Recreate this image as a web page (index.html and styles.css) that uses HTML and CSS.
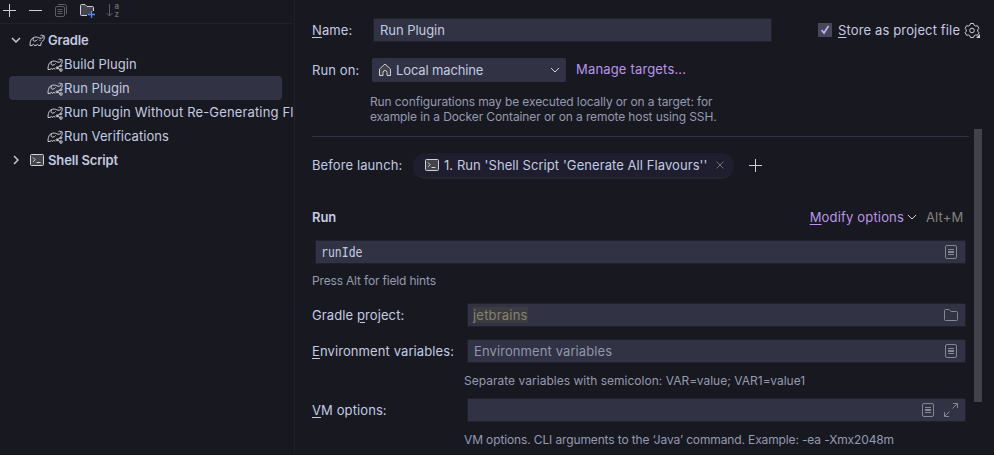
FILE: index.html
```html
<!DOCTYPE html>
<html lang="en">
<head>
<meta charset="utf-8">
<title>Run Configurations</title>
<link rel="stylesheet" href="styles.css">
</head>
<body>
<svg class="defs" width="0" height="0" aria-hidden="true">
  <symbol id="elephant" viewBox="0 0 16 16"><path d="M1 13.500C1 9.500 2 6 5.500 5.200 8 4.600 9.500 5.800 11 6.200c2 .5 3.200-.6 3-2C13.800 3 12.300 2.700 11.500 3.700M14.500 3c1.300 1.500 1 4.500-.8 6-1.300 1-1.900 2.300-2 4.500H9.500c-.2-1.500-2-1.500-2.200 0H5.500c-.2-1.500-2-1.500-2.200 0H1M4.500 6c-.8 1.800-.3 3.300 1.200 3.200 1.300-.1 2.100-.9 2.800-1.700M10.300 8.200h1.400"/></symbol>
  <symbol id="elephant-run" viewBox="0 0 16 16"><path d="M1 13.500C1 9.500 2 6 5.500 5.200 8 4.600 9.500 5.800 11 6.200c2 .5 3.200-.6 3-2C13.800 3 12.300 2.700 11.500 3.700M14.500 3c1.300 1.500 1 4-.5 5.500M8 13.500c-.2-1.500-2-1.500-2.500 0-.2-1.500-2-1.500-2.200 0H1M4.500 6c-.8 1.800-.3 3.300 1.200 3.200 1.300-.1 2.100-.9 2.800-1.700M13.500 9.800l-3.500 2 3.500 2"/><circle cx="10" cy="11.800" r="1"/><circle cx="14" cy="9.800" r="1"/><circle cx="14" cy="14" r="1.300"/></symbol>
  <symbol id="terminal" viewBox="0 0 16 16"><rect class="shade" x="1.500" y="2.500" width="13" height="11" rx="1"/><path d="m4 5.500 2.200 2.200L4 9.900M7.500 10.500h4"/></symbol>
  <symbol id="list" viewBox="0 0 16 16"><rect x="2.500" y="1.500" width="11" height="13" rx="1.500"/><path d="M5 5.500h6M5 7.500h6M5 8.500h6M5 10.500h6"/></symbol>
  <symbol id="down" viewBox="0 0 16 16"><path d="m4 6 4 4 4-4"/></symbol>
  <symbol id="plus" viewBox="0 0 16 16"><path d="M8.500 2v13M2 8.500h13"/></symbol>
</svg>
<div class="window">
  <aside class="sidebar">
    <div class="toolbar">
      <svg class="icon"><use href="#plus"/></svg>
      <svg class="icon" viewBox="0 0 16 16"><path d="M2 8.500h13"/></svg>
      <svg class="icon disabled" viewBox="0 0 16 16"><rect x="2.500" y="4.500" width="9" height="10" rx="1.500"/><path d="M5 2.500h6.500q2 0 2 2V12M4.500 7.500h5M4.500 9.500h5M4.500 11.500h5"/></svg>
      <svg class="icon" viewBox="0 0 16 16"><path class="shade" d="M8 13.500H2.500q-1 0-1-1v-9q0-1 1-1H6l2 2h5.500q1 0 1 1V9"/><path class="blue" d="M12.500 9v7M9 12.500h7"/></svg>
      <svg class="icon disabled" viewBox="0 0 16 16"><path d="M4.500 2v12M1.500 11l3 3 3-3"/><text x="9.500" y="7">a</text><text x="9.500" y="15">z</text></svg>
    </div>
    <div class="tree">
      <div class="node group"><svg class="icon arrow"><use href="#down"/></svg><svg class="icon"><use href="#elephant"/></svg><span>Gradle</span></div>
      <div class="node leaf"><svg class="icon"><use href="#elephant-run"/></svg><span>Build Plugin</span></div>
      <div class="node leaf selected"><svg class="icon"><use href="#elephant-run"/></svg><span>Run Plugin</span></div>
      <div class="node leaf long"><svg class="icon"><use href="#elephant-run"/></svg><span>Run Plugin Without Re-Generating Fl</span></div>
      <div class="node leaf"><svg class="icon"><use href="#elephant-run"/></svg><span>Run Verifications</span></div>
      <div class="node group"><svg class="icon arrow" viewBox="0 0 16 16"><path d="m6 4 4 4-4 4"/></svg><svg class="icon"><use href="#terminal"/></svg><span>Shell Script</span></div>
    </div>
  </aside>
  <main class="main">
    <div class="row name-row">
      <span class="label short"><u>N</u>ame:</span>
      <div class="field name-field">Run Plugin</div>
      <span class="check"><svg viewBox="0 0 14 14"><path d="m3.500 7 2.500 3 4.500-7"/></svg></span>
      <span class="store"><u>S</u>tore as project file</span>
      <svg class="icon gear" viewBox="0 0 16 16"><path d="m6.500 1.500h3l.7 1.800 1.300.7 1.900-.3 1.500 2.600-1.200 1.500v1.400l1.200 1.500-1.500 2.600-1.900-.3-1.300.7-.7 1.800h-3l-.7-1.800-1.300-.7-1.900.3-1.500-2.600 1.200-1.500V7.800L1.100 6.300l1.500-2.600 1.900.3 1.300-.7z"/><circle cx="8" cy="8.500" r="2.300"/><path class="corner" d="M16 12v4h-4z"/></svg>
    </div>
    <div class="row target-row">
      <span class="label short">Run on:</span>
      <div class="select"><svg class="icon" viewBox="0 0 16 16"><path class="shade" d="M2.500 7 8 2l5.500 5v6.500h-3.500v-3q0-2-2-2t-2 2v3H2.500z"/></svg><span>Local machine</span><svg class="icon"><use href="#down"/></svg></div>
      <span class="link">Manage targets...</span>
    </div>
    <p class="help target-help">Run configurations may be executed locally or on a target: for<br>example in a Docker Container or on a remote host using SSH.</p>
    <div class="scroll">
      <div class="content">
        <div class="row launch-row">
          <span class="label launch">Before launch:</span>
          <div class="chip"><svg class="icon"><use href="#terminal"/></svg><span>1. Run 'Shell Script 'Generate All Flavours''</span><svg class="icon close" viewBox="0 0 16 16"><path d="m4.500 4.500 7 7m0-7-7 7"/></svg></div>
          <svg class="icon"><use href="#plus"/></svg>
        </div>
        <div class="row run-row"><span class="heading">Run</span><span class="link modify"><u>M</u>odify options</span><svg class="icon"><use href="#down"/></svg><span class="shortcut">Alt+M</span></div>
        <div class="field task"><span>runIde</span><svg class="icon dim"><use href="#list"/></svg></div>
        <p class="help task-help">Press Alt for field hints</p>
        <div class="row project-row"><span class="label wide">Gradle <u>p</u>roject:</span><div class="field"><mark>jetbrains</mark><svg class="icon dim" viewBox="0 0 16 16"><path d="M1.500 3.500q0-1 1-1h3.500l2 2h5.500q1 0 1 1v7q0 1-1 1h-11q-1 0-1-1z"/></svg></div></div>
        <div class="row env-row"><span class="label wide"><u>E</u>nvironment variables:</span><div class="field placeholder"><span>Environment variables</span><svg class="icon dim"><use href="#list"/></svg></div></div>
        <p class="help field-help env-help">Separate variables with semicolon: VAR=value; VAR1=value1</p>
        <div class="row vm-row"><span class="label wide"><u>V</u>M options:</span><div class="field"><svg class="icon dim first"><use href="#list"/></svg><svg class="icon dim" viewBox="0 0 16 16"><path d="M9.500 6.500 14 2M10 1.500h4.500V6M6.500 9.500 2 14M1.500 10v4.500H6"/></svg></div></div>
        <p class="help field-help vm-help">VM options. CLI arguments to the ‘Java’ command. Example: -ea -Xmx2048m</p>
      </div>
      <div class="scrollbar"></div>
    </div>
  </main>
</div>
</body>
</html>
```
FILE: styles.css
```css
* { box-sizing: border-box; }
body { margin: 0; background: #181821; color: #c4cbe0; font: 13px/16px Inter, sans-serif; overflow: hidden; }
.defs { display: none; }
.window { display: flex; width: 994px; height: 455px; overflow: hidden; border-bottom: 1px solid #12121a; white-space: nowrap; }
.icon { width: 16px; height: 16px; flex: none; fill: none; stroke: #ced0d6; stroke-width: 1; }
.shade { fill: #43454a; }
.disabled { stroke: #5c5d64; }
.disabled text { fill: #6a6b72; stroke: none; font: 600 8px/8px Inter, sans-serif; }
.blue { stroke: #548af7; stroke-width: 1.300; }
.dim { stroke: #85868e; }
u { text-decoration-thickness: 1px; text-underline-offset: 2px; }

.sidebar { width: 295px; flex: none; border-right: 1px solid #20202b; overflow: hidden; }
.toolbar { display: flex; gap: 10px; height: 24px; padding: 2px 0 0 1px; border-bottom: 1px solid #20202b; }
.tree { padding-top: 4px; }
.node { display: flex; align-items: center; height: 24px; }
.group { padding-left: 8px; font-weight: 600; letter-spacing: -.13px; }
.group .arrow { margin-right: 5px; stroke-width: 1.400; }
.group span { margin-left: 3px; }
.leaf { margin-left: 9px; padding-left: 38px; }
.leaf span { margin-left: 1px; letter-spacing: .05px; }
.long span { letter-spacing: .15px; }
.selected { width: 273px; background: #313244; border-radius: 4px; }

.main { flex: 1; padding: 19px 0 0 17px; }
.row { display: flex; align-items: center; }
.label { flex: none; letter-spacing: .1px; }
.field { display: flex; align-items: center; height: 22px; background: #313244; outline: 1px solid #20202c; padding: 0 6px; }
.name-row { height: 22px; }
.name-row .label { padding-bottom: 1px; }
.short { width: 60px; }
.name-field { width: 397px; margin-left: 2px; padding-bottom: 1px; letter-spacing: -.05px; }
.check { width: 14px; height: 14px; margin-left: 47px; background: #45475a; }
.check svg { display: block; fill: none; stroke: #cba6f7; stroke-width: 1.800; }
.store { width: 122px; margin-left: 6px; letter-spacing: .14px; }
.gear { margin-left: 4px; }
.corner { fill: #ced0d6; stroke: none; }
.target-row { height: 24px; margin-top: 17px; }
.select { display: flex; align-items: center; width: 194px; height: 24px; padding: 0 3px 0 5px; background: #313244; border-radius: 2px; }
.select span { flex: 1; margin-left: 3px; letter-spacing: -.13px; }
.link { color: #b996ea; letter-spacing: .17px; }
.target-row .link { margin-left: 10px; padding-bottom: 2px; }
.help { margin: 0; font-size: 12px; line-height: 15px; letter-spacing: -.11px; color: #949ab0; }
.target-help { margin: 12px 0 12px 58px; height: 30px; }

.scroll { display: flex; height: 319px; }
.content { width: 657px; border-top: 1px solid #313244; }
.scrollbar { width: 8px; height: 273px; margin: -7px 0 0 5px; background: #42424c; }
.launch-row { height: 25px; margin-top: 16px; }
.launch { width: 101px; padding-bottom: 2px; }
.launch-row > .icon { margin-bottom: 1px; }
.chip { display: flex; align-items: center; width: 321px; height: 26px; padding: 0 6px 0 11px; background: #1e1e2e; border-bottom: 2px solid #24242c; border-radius: 13px; margin-right: 13px; }
.chip span { flex: 1; margin-left: 4px; letter-spacing: .07px; }
.close { stroke: #6c6d76; }
.run-row { height: 18px; margin-top: 30px; }
.heading { font-weight: 600; flex: 1; letter-spacing: -.1px; }
.shortcut { width: 43px; color: #85827f; margin-left: 6px; letter-spacing: .15px; }
.task { width: 649px; margin: 15px 0 0 4px; padding-left: 5px; font-family: "DejaVu Sans Mono", monospace; }
.task span { font-size: 14px; transform: scaleX(.82); transform-origin: left; }
.field > .icon { margin-left: auto; }
.field > .first + .icon { margin-left: 7px; }
.task-help { margin-top: 10px; letter-spacing: -.17px; }
.wide { width: 156px; }
.content .row .field { width: 497px; }
.project-row { margin-top: 16px; }
.env-row { margin-top: 14px; }
.placeholder { color: #9096ac; letter-spacing: .1px; }
mark { background: #3b3b40; color: #85836f; margin: -1px 0 0 -1px; letter-spacing: .2px; }
.field-help { margin: 11px 0 11px 152px; }
.env-help { letter-spacing: .02px; }
.vm-help { margin-bottom: 0; letter-spacing: -.13px; }
```
